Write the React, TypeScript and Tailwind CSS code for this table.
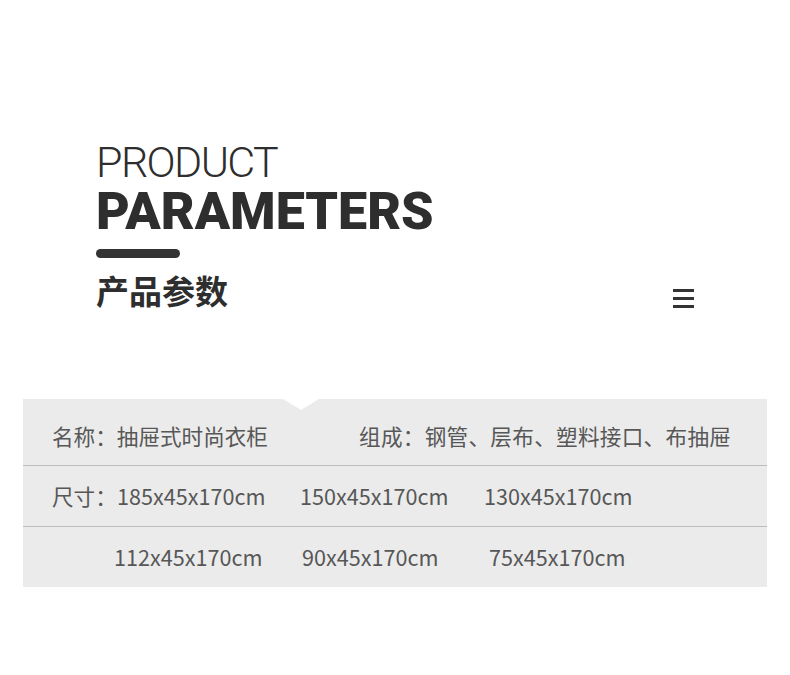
import React from "react";

export default function App() {
  const cjk = { fontFamily: '"Noto Sans CJK SC", "Noto Sans", sans-serif' };
  return (
    <div className="w-[790px] h-[675px] bg-white relative overflow-hidden">
      <div className="pl-[96px] pt-[140px] flex flex-col">
        <div
          className="text-[43px] leading-[44px] text-[#2e2e2e] tracking-[-1.6px] font-light"
          style={{ fontFamily: 'Roboto, "Liberation Sans", sans-serif' }}
        >
          PRODUCT
        </div>
        <div
          className="mt-[4px] text-[52px] leading-[48px] text-[#2e2e2e] font-black tracking-[0px]"
          style={{ fontFamily: 'Roboto, "Liberation Sans", sans-serif' }}
        >
          PARAMETERS
        </div>
        <div className="mt-[13px] w-[84px] h-[9px] rounded-full bg-[#333333]" />
        <div className="flex items-center justify-between pr-[96px]">
          <div className="mt-[12px] text-[33px] leading-[40px] font-bold text-[#2e2e2e]" style={cjk}>
            产品参数
          </div>
          <div className="mt-[28px] flex flex-col gap-[5px] w-[21px]">
            <div className="h-[3px] bg-[#333]" />
            <div className="h-[3px] bg-[#333]" />
            <div className="h-[3px] bg-[#333]" />
          </div>
        </div>
      </div>

      <div className="absolute left-[23px] top-[399px] w-[744px] bg-[#ebebeb] text-[21.6px] text-[#575757]" style={cjk}>
        <div className="absolute left-[260px] top-0 w-0 h-0 border-l-[18px] border-r-[18px] border-t-[11px] border-l-transparent border-r-transparent border-t-white" />
        <div className="h-[67px] flex items-end pb-[13px] border-b border-[#bdbdbd]">
          <span className="ml-[29px] w-[307px]">名称：抽屉式时尚衣柜</span>
          <span className="tracking-[0.3px]">组成：钢管、层布、塑料接口、布抽屉</span>
        </div>
        <div className="h-[61px] flex items-center border-b border-[#bdbdbd]">
          <span className="ml-[29px] w-[65px]">尺寸：</span>
          <span className="w-[183px]">185x45x170cm</span>
          <span className="w-[184px]">150x45x170cm</span>
          <span>130x45x170cm</span>
        </div>
        <div className="h-[60px] flex items-center">
          <span className="ml-[91px] w-[188px]">112x45x170cm</span>
          <span className="w-[187px]">90x45x170cm</span>
          <span>75x45x170cm</span>
        </div>
      </div>
    </div>
  );
}
